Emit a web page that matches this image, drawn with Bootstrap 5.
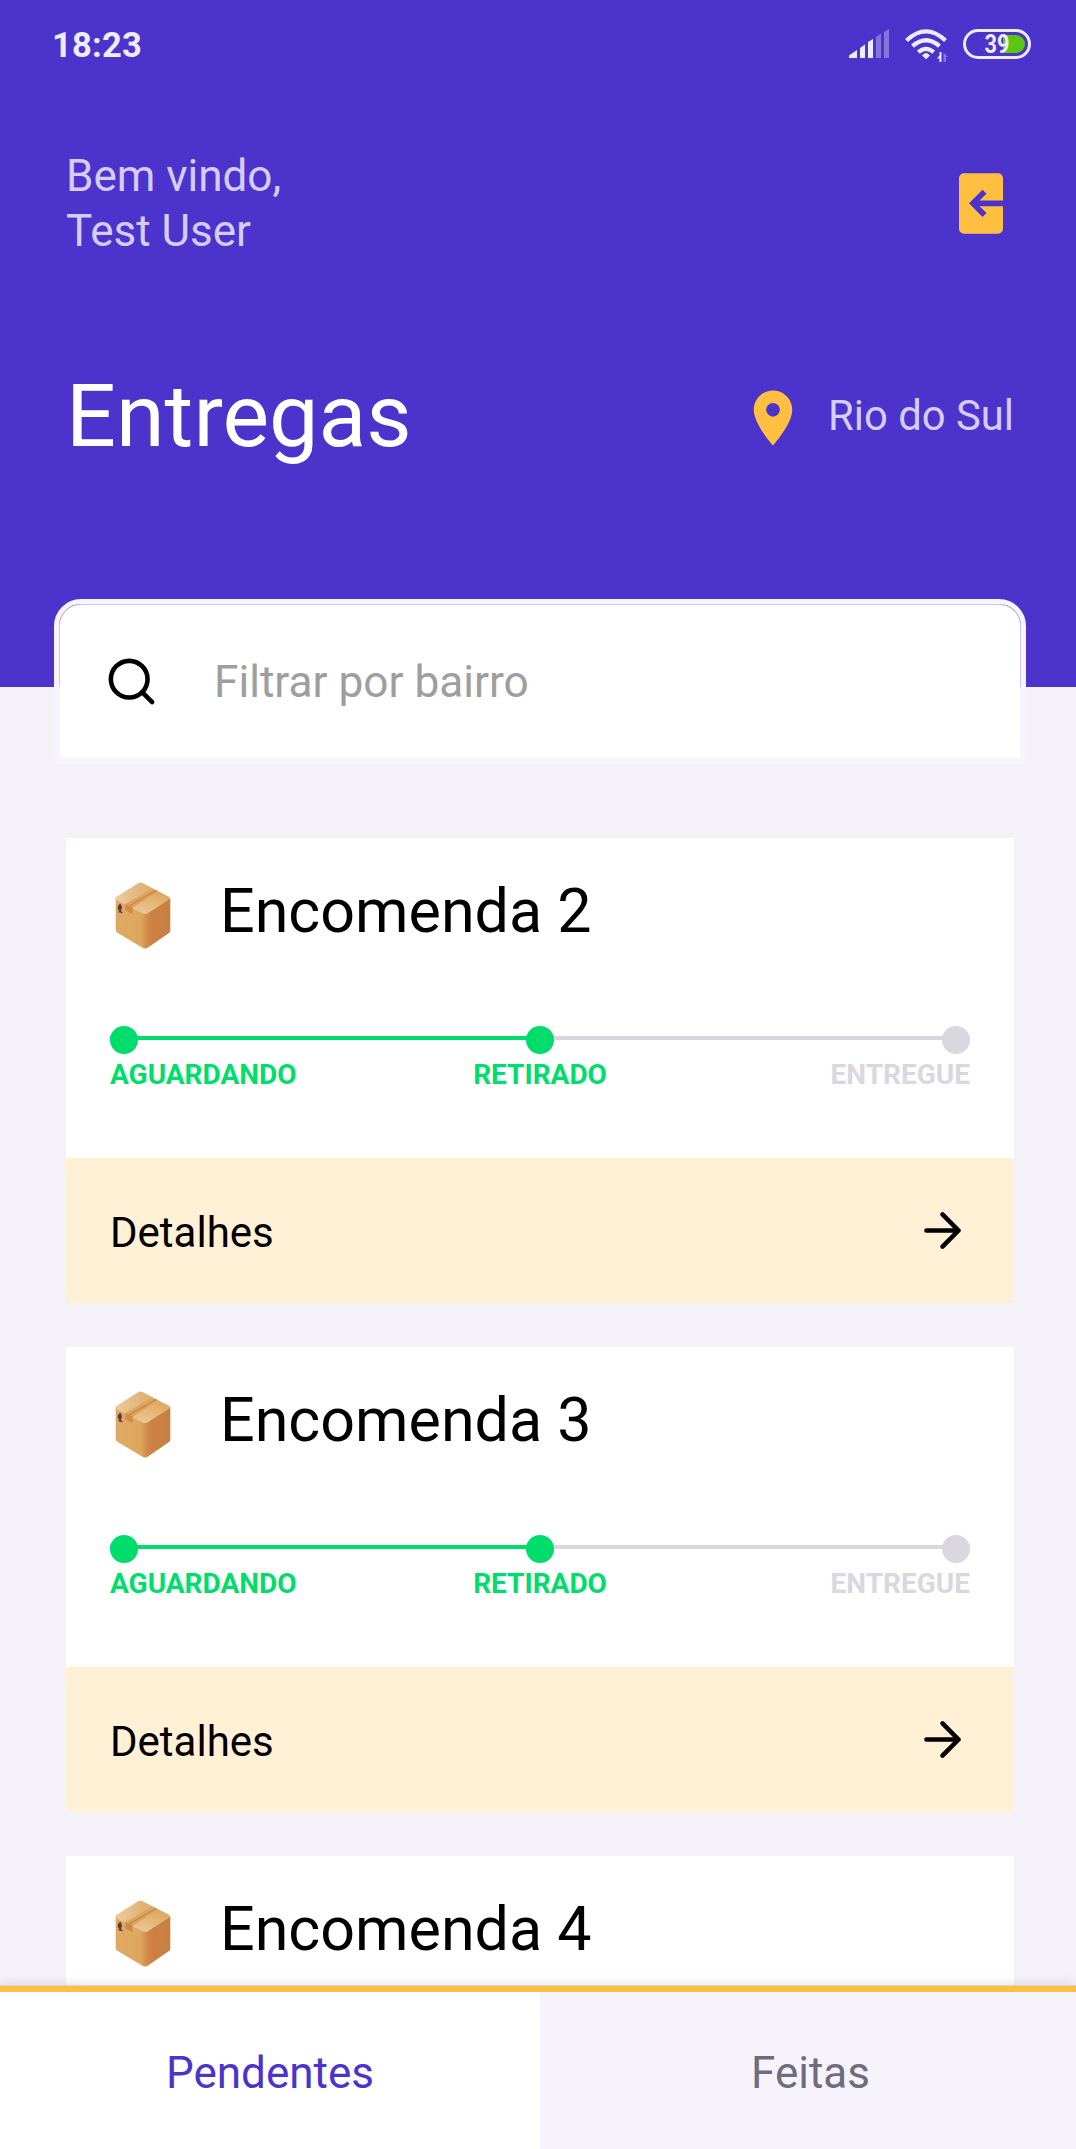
<!DOCTYPE html>
<html lang="pt-BR">
<head>
<meta charset="utf-8">
<meta name="viewport" content="width=device-width, initial-scale=1">
<title>Entregas</title>
<link href="https://cdn.jsdelivr.net/npm/bootstrap@5.3.0/dist/css/bootstrap.min.css" rel="stylesheet">
<style>
  :root { --purple: #4c33cc; --lilac: #d5ccff; --amber: #ffc042; --green: #00dd6c; --grey: #dad7e0; }
  body { font-family: Roboto, "Liberation Sans", sans-serif; background: #f4f2f8; color: #000; }
  svg { display: block; flex: none; }
  .screen { height: 2149px; }
  .hero { height: 687px; background: var(--purple); padding: 0 62px 0 66px; flex: none; }
  .status { height: 90px; margin: 0 -17px 0 -14px; color: #eeebfb; }
  .status svg { margin-bottom: 2px; }
  .clock { font-size: 34.5px; font-weight: 700; line-height: 40px; letter-spacing: .2px; }
  .welcome { margin-top: 58px; height: 110px; font-size: 44px; line-height: 55px; color: var(--lilac); }
  .welcome div { padding-top: 2px; }
  .welcome svg { margin-right: 5px; }
  .headline { margin-top: 108px; height: 100px; }
  .headline h1 { font-size: 88px; line-height: 100px; font-weight: 400; color: #fff; }
  .place { font-size: 41.8px; line-height: 50px; color: var(--lilac); gap: 22px; }
  .filter { flex: none; height: 165px; margin: -88px 50px 0 54px; padding: 1px; border: 5px solid #f7f5fb; border-radius: 27px 27px 0 0;
    background: linear-gradient(#cfc5f2 83px, #f7f5fb 83px) padding-box; }
  .filter-field { height: 153px; background: #fff; border-radius: 21px 21px 0 0; padding: 0 44px; }
  .filter-field input { font-size: 44.2px; line-height: 56px; height: 60px; margin-left: 55px; padding: 0; background: none; }
  .filter-field input::placeholder { color: #9e9e9e; opacity: 1; }
  .deliveries { margin-top: 74px; padding: 0 62px 0 66px; gap: 44px; min-height: 0; }
  .delivery { flex: none; height: 465px; border: 0; border-radius: 0; background: #fff; color: #000; }
  .delivery-top { height: 320px; padding: 39px 44px 0; }
  .delivery h2 { font-size: 61px; line-height: 69px; font-weight: 400; margin-left: 45px; padding-bottom: 5px; }
  .track { margin-top: 75px; height: 28px; background: linear-gradient(90deg, var(--green) 50%, var(--grey) 50%) 0 10px / 100% 4px no-repeat; }
  .dot { width: 28px; height: 28px; border-radius: 50%; background: var(--green); }
  .dot.todo { background: var(--grey); }
  .steps { margin-top: 5px; font-size: 28px; line-height: 32px; font-weight: 700; color: var(--green); }
  .steps .todo { color: var(--grey); }
  .details { height: 145px; padding: 0 44px; background: #fff0d6; color: #000; font-size: 42px; line-height: 50px; border: 0; border-radius: 0; }
  .details span { padding-top: 4px; }
  .tabs { height: 164px; border-top: 1px solid #d3d5da; box-shadow: 0 0 12px rgba(0,0,0,.13); z-index: 2; }
  .tabs a { border-top: 6px solid var(--amber); font-size: 44px; line-height: 56px; padding-top: 5px; text-decoration: none; }
  .tab-on { width: 540px; flex: none; background: #fff; color: var(--purple); }
  .tab-off { background: #f6f4fa; color: #6f6c80; padding-left: 5px; }
</style>
</head>
<body>
<div class="screen d-flex flex-column overflow-hidden position-relative">
  <header class="hero">
    <div class="status d-flex justify-content-between align-items-center">
      <span class="clock">18:23</span>
      <svg width="182" height="36" viewBox="0 0 182 36" fill="#eeebfb">
        <path d="M0 32V29.500L8 24V32zM11 32V22L16 18.500V32zM19 32V16L24 13V32z"/>
        <path opacity=".35" d="M27 32V11L32 7.500V32zM35 32V6L40 3V32z"/>
        <g fill="none" stroke="#eeebfb" stroke-width="4.200">
          <path d="M57.500 14.500Q77 -3.800 96.500 14.500M63.500 20.200Q77 8.300 90.500 20.200M69.300 26.200Q77 19.600 84.700 26.200"/>
        </g>
        <path d="M73 29.500Q77 24.500 81 29.500L77 33.300zM92.500 26v10h-2v-3.400h-2.500l2.500-3V26z"/>
        <path opacity=".35" d="M94.500 26.500l4.500 4.500H97v5h-2.500z"/>
        <rect x="115.500" y="4.500" width="65" height="27" rx="13.500" fill="none" stroke="#eeebfb" stroke-width="3"/>
        <path fill="#58c612" d="M154 9h13a9 9 0 0 1 0 18h-13z"/>
        <text x="135.500" y="26.800" textLength="25" lengthAdjust="spacingAndGlyphs" font-family="Roboto" font-weight="700" font-size="25">39</text>
      </svg>
    </div>
    <div class="welcome d-flex justify-content-between align-items-center">
      <div>Bem vindo,<br>Test User</div>
      <svg width="50" height="61" viewBox="0 0 50 61"><path fill="#ffc042" d="M5 .300H39a5 5 0 0 1 5 5V27.500H20.500L27.500 20.700 23.500 16.700 10 30.300 23.500 44 27.500 40 20.500 33.200H44V55.700a5 5 0 0 1-5 5H5a5 5 0 0 1-5-5V5.300a5 5 0 0 1 5-5z"/></svg>
    </div>
    <div class="headline d-flex justify-content-between align-items-center">
      <h1 class="m-0">Entregas</h1>
      <div class="place d-flex align-items-center">
        <svg class="mt-1" width="66" height="66" viewBox="0 0 24 24" fill="#ffc042"><path fill-rule="evenodd" d="M12 2C8.130 2 5 5.130 5 9c0 5.250 7 13 7 13s7-7.750 7-13c0-3.870-3.130-7-7-7zm0 9.500a2.500 2.500 0 1 1 0-5 2.500 2.500 0 0 1 0 5z"/></svg>
        <span>Rio do Sul</span>
      </div>
    </div>
  </header>

  <div class="filter position-relative">
    <div class="filter-field d-flex align-items-center">
      <svg width="55" height="55" viewBox="0 0 24 24" fill="none" stroke="#000" stroke-width="2" stroke-linecap="round"><circle cx="11" cy="11" r="8"/><path d="M21 21l-4.350-4.350"/></svg>
      <input class="form-control border-0 shadow-none rounded-0" type="text" placeholder="Filtrar por bairro" aria-label="Filtrar por bairro">
    </div>
  </div>

  <main class="deliveries d-flex flex-column">
    <article class="delivery card">
      <div class="delivery-top">
        <div class="d-flex align-items-center">
          <svg width="65" height="74" viewBox="0 0 65 74">
            <defs>
              <linearGradient id="lid" x1="0" y1=".5" x2="1" y2=".5"><stop offset="0" stop-color="#edcb9d"/><stop offset=".5" stop-color="#e0b377"/><stop offset="1" stop-color="#dea558"/></linearGradient>
              <linearGradient id="lidfront" x1=".2" y1="1" x2=".7" y2="0"><stop offset="0" stop-color="#ebc896"/><stop offset="1" stop-color="#dea75e"/></linearGradient>
              <linearGradient id="sideL"><stop offset="0" stop-color="#dda965"/><stop offset=".85" stop-color="#dea75d"/><stop offset="1" stop-color="#d5934f"/></linearGradient>
              <linearGradient id="sideR"><stop offset="0" stop-color="#d58f4d"/><stop offset=".25" stop-color="#cc8143"/><stop offset="1" stop-color="#c97f41"/></linearGradient>
            </defs>
            <g id="parcel">
              <path fill="url(#sideL)" d="M5.700 20L35 37V71.500Q33.500 71.500 32 70.500L7 55.500Q5.700 54.500 5.700 53z"/>
              <path fill="url(#sideR)" d="M35 36L60.300 21V53.500Q60.300 55 59 56L38 70.500Q36.500 71.500 35 71.500z"/>
              <path fill="url(#lid)" d="M7 19.500L28.500 6Q30.500 4.800 32.500 6L59 20Q60.500 21.500 59 22.500L38 36Q35 38 32 36L7 23.500Q4.500 21.500 7 19.500z"/>
              <path fill="url(#lidfront)" d="M22 31L48 14.500 59 20Q60.500 21.500 59 22.500L38 36Q35 38 32 36z"/>
              <path fill="#dda45e" d="M15.500 27L42 11.500 48 14.500 22.500 31V37L15.500 33.500z"/>
              <path fill="none" stroke="#c98343" stroke-width="1.300" d="M19 29L46.500 13.300"/>
              <path fill="#cf8b44" d="M15.500 27L22.500 30.500V37L15.500 33.500z"/>
              <path fill="#623744" d="M10 26.500Q12 28 12 31L11 33.500 13 36.500 7.700 35 9.500 34 7.800 32V29.500z"/>
            </g>
          </svg>
          <h2 class="mb-0">Encomenda 2</h2>
        </div>
        <div class="track d-flex justify-content-between"><span class="dot"></span><span class="dot"></span><span class="dot todo"></span></div>
        <div class="steps row gx-0"><span class="col">AGUARDANDO</span><span class="col text-center">RETIRADO</span><span class="col text-end todo">ENTREGUE</span></div>
      </div>
      <a href="#" class="details d-flex justify-content-between align-items-center text-decoration-none"><span>Detalhes</span>
        <svg width="55" height="55" viewBox="0 0 24 24" fill="none" stroke="#000" stroke-width="2" stroke-linecap="round" stroke-linejoin="round"><path d="M5 12h14M12 5l7 7-7 7"/></svg></a>
    </article>

    <article class="delivery card">
      <div class="delivery-top">
        <div class="d-flex align-items-center">
          <svg width="65" height="74" viewBox="0 0 65 74"><use href="#parcel"/></svg>
          <h2 class="mb-0">Encomenda 3</h2>
        </div>
        <div class="track d-flex justify-content-between"><span class="dot"></span><span class="dot"></span><span class="dot todo"></span></div>
        <div class="steps row gx-0"><span class="col">AGUARDANDO</span><span class="col text-center">RETIRADO</span><span class="col text-end todo">ENTREGUE</span></div>
      </div>
      <a href="#" class="details d-flex justify-content-between align-items-center text-decoration-none"><span>Detalhes</span>
        <svg width="55" height="55" viewBox="0 0 24 24" fill="none" stroke="#000" stroke-width="2" stroke-linecap="round" stroke-linejoin="round"><path d="M5 12h14M12 5l7 7-7 7"/></svg></a>
    </article>

    <article class="delivery card">
      <div class="delivery-top">
        <div class="d-flex align-items-center">
          <svg width="65" height="74" viewBox="0 0 65 74"><use href="#parcel"/></svg>
          <h2 class="mb-0">Encomenda 4</h2>
        </div>
      </div>
    </article>
  </main>

  <nav class="tabs d-flex position-absolute bottom-0 start-0 end-0">
    <a href="#" class="tab-on d-flex align-items-center justify-content-center">Pendentes</a>
    <a href="#" class="tab-off d-flex flex-fill align-items-center justify-content-center">Feitas</a>
  </nav>
</div>
<script src="https://cdn.jsdelivr.net/npm/bootstrap@5.3.0/dist/js/bootstrap.bundle.min.js"></script>
</body>
</html>
